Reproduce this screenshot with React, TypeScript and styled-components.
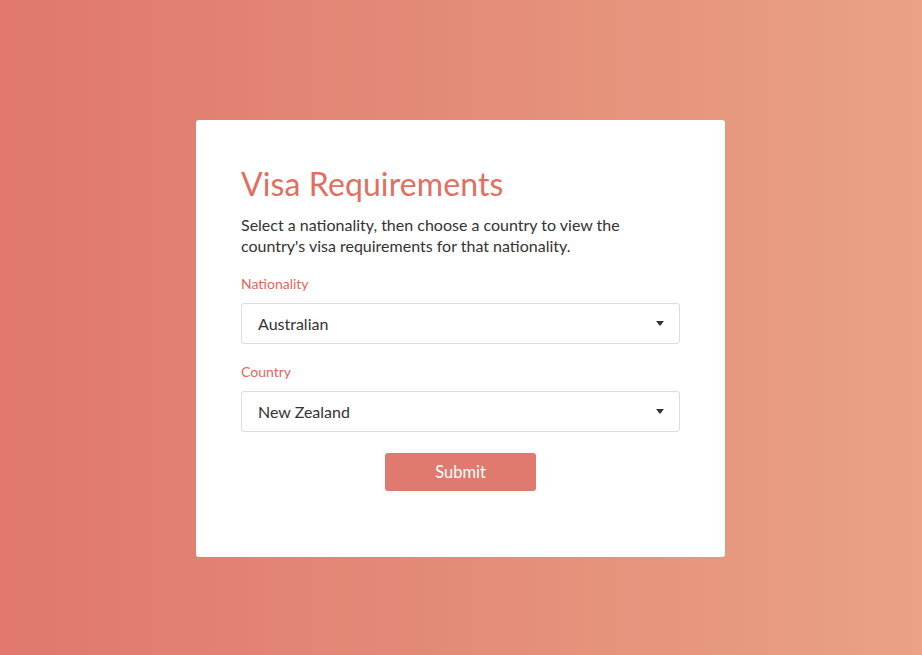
import React from "react";
import styled, { createGlobalStyle } from "styled-components";

const Global = createGlobalStyle`
  html, body { margin: 0; padding: 0; }
  body {
    font-family: "Lato", "Open Sans", sans-serif;
    background: linear-gradient(90deg, #e0786d 0%, #e48c78 50%, #e9a285 100%);
    min-height: 655px;
  }
`;

const Page = styled.div`
  width: 922px;
  height: 655px;
  display: flex;
  justify-content: flex-start;
  padding: 120px 0 0 196px;
  box-sizing: border-box;
`;

const Card = styled.div`
  width: 529px;
  height: 437px;
  box-sizing: border-box;
  background: #ffffff;
  border-radius: 3px;
  padding: 45px;
  display: flex;
  flex-direction: column;
`;

const Title = styled.h1`
  margin: 0;
  font-size: 32px;
  line-height: 37px;
  font-weight: 400;
  color: #e06f62;
  letter-spacing: 0.1px;
`;

const Intro = styled.p`
  margin: 12px 0 0;
  font-size: 16px;
  line-height: 21px;
  color: #333333;
  max-width: 400px;
`;

const Label = styled.label`
  display: block;
  margin-top: 18px;
  font-size: 14px;
  line-height: 20px;
  color: #e0675a;
`;

const SelectBox = styled.div`
  margin-top: 9px;
  height: 41px;
  box-sizing: border-box;
  border: 1px solid #dcdcdc;
  border-radius: 3px;
  display: flex;
  align-items: center;
  justify-content: space-between;
  padding: 0 15px 0 16px;
  font-size: 16px;
  color: #333333;
`;

const Caret = styled.span`
  width: 0;
  height: 0;
  border-left: 4.5px solid transparent;
  border-right: 4.5px solid transparent;
  border-top: 5px solid #333333;
`;

const Actions = styled.div`
  display: flex;
  justify-content: center;
  margin-top: 21px;
`;

const Button = styled.button`
  width: 151px;
  height: 38px;
  border: none;
  border-radius: 3px;
  background: #e07a6e;
  color: #ffffff;
  font-family: inherit;
  font-size: 16.5px;
  cursor: pointer;
`;

const Select: React.FC<{ value: string }> = ({ value }) => (
  <SelectBox>
    <span>{value}</span>
    <Caret />
  </SelectBox>
);

export default function App() {
  return (
    <>
      <Global />
      <Page>
        <Card>
          <Title>Visa Requirements</Title>
          <Intro>
            Select a nationality, then choose a country to view the country's visa
            requirements for that nationality.
          </Intro>
          <Label>Nationality</Label>
          <Select value="Australian" />
          <Label>Country</Label>
          <Select value="New Zealand" />
          <Actions>
            <Button>Submit</Button>
          </Actions>
        </Card>
      </Page>
    </>
  );
}
